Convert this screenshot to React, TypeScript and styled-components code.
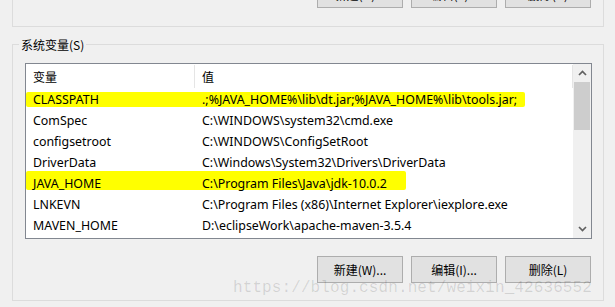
import styled, { createGlobalStyle } from "styled-components";

const GlobalStyle = createGlobalStyle`
  html, body {
    margin: 0;
    padding: 0;
    background: #f0f0f0;
  }
  body {
    width: 615px;
    height: 307px;
    overflow: hidden;
    font-family: "Noto Sans", "Noto Sans CJK SC", sans-serif;
    font-size: 12.4px;
    color: #000;
  }
`;

const Page = styled.div`
  position: relative;
  width: 615px;
  height: 307px;
  padding: 0 11px 0 12px;
  box-sizing: border-box;
`;

const TopGroup = styled.div`
  height: 27px;
  box-sizing: border-box;
  border: 1px solid #dcdcdc;
  border-top: none;
  display: flex;
  justify-content: flex-end;
  align-items: flex-start;
  padding-right: 12px;
`;

const ButtonRow = styled.div<{ $offset?: number }>`
  display: flex;
  justify-content: flex-end;
  gap: 8px;
  margin-top: ${(p) => p.$offset ?? 0}px;
`;

const Button = styled.div`
  width: 86px;
  height: 27px;
  box-sizing: border-box;
  border: 1px solid #adadad;
  background: #e1e1e1;
  display: flex;
  align-items: center;
  justify-content: center;
  font-family: "Noto Sans CJK SC", "Noto Sans", sans-serif;
  font-size: 12px;
`;

const SysGroup = styled.div`
  position: relative;
  margin-top: 17px;
  height: 257px;
  box-sizing: border-box;
  border: 1px solid #dcdcdc;
  padding: 18px 11px 0 12px;
`;

const Legend = styled.div`
  position: absolute;
  top: -9px;
  left: 6px;
  padding: 0 2px;
  background: #f0f0f0;
  font-family: "Noto Sans CJK SC", sans-serif;
  font-size: 12px;
  line-height: 18px;
`;

const List = styled.div`
  height: 176px;
  box-sizing: border-box;
  border: 1px solid #828790;
  background: #fff;
  display: flex;
`;

const ListBody = styled.div`
  width: 547px;
  display: flex;
  flex-direction: column;
`;

const Header = styled.div`
  display: flex;
  height: 25px;
`;

const HeaderCell = styled.div<{ $w?: number }>`
  ${(p) => (p.$w ? `width: ${p.$w}px;` : "flex: 1;")}
  box-sizing: border-box;
  padding-left: 7px;
  border-right: 1px solid #e5e5e5;
  margin: 1px 0 0;
  height: 23px;
  line-height: 24px;
  font-family: "Noto Sans CJK SC", sans-serif;
  font-size: 12px;
`;

const Row = styled.div<{ $mark?: { top: number; height: number; width: number } }>`
  position: relative;
  display: flex;
  height: 21px;
  line-height: 21px;
  &::before {
    content: "";
    display: ${(p) => (p.$mark ? "block" : "none")};
    position: absolute;
    left: 0;
    top: ${(p) => p.$mark?.top ?? 0}px;
    height: ${(p) => p.$mark?.height ?? 0}px;
    width: ${(p) => p.$mark?.width ?? 0}px;
    background: #ffff00;
    border-radius: 2px;
  }
`;

const Cell = styled.div<{ $w?: number }>`
  position: relative;
  ${(p) => (p.$w ? `width: ${p.$w}px;` : "flex: 1;")}
  box-sizing: border-box;
  padding-left: 7px;
  white-space: nowrap;
  overflow: hidden;
`;

const ScrollBar = styled.div`
  width: 18px;
  background: #f0f0f0;
  display: flex;
  flex-direction: column;
`;

const Arrow = styled.div`
  height: 18px;
  display: flex;
  align-items: center;
  justify-content: center;
`;

const Thumb = styled.div`
  height: 48px;
  margin: 0 1px;
  background: #cdcdcd;
`;

const Track = styled.div`
  flex: 1;
`;

const Watermark = styled.div`
  position: absolute;
  left: 233px;
  top: 280px;
  font-family: "Liberation Mono", monospace;
  font-size: 16px;
  line-height: 16px;
  letter-spacing: 0.1px;
  color: rgba(0, 0, 0, 0.13);
  pointer-events: none;
  white-space: nowrap;
`;

const Chevron = ({ up }: { up?: boolean }) => (
  <svg width="9" height="6" viewBox="0 0 9 6">
    <path
      d={up ? "M1 5 L4.5 1.5 L8 5" : "M1 1 L4.5 4.5 L8 1"}
      fill="none"
      stroke="#606060"
      strokeWidth="1.7"
    />
  </svg>
);

const rows = [
  { name: "CLASSPATH", value: ".;%JAVA_HOME%\\lib\\dt.jar;%JAVA_HOME%\\lib\\tools.jar;", mark: { top: 3, height: 15, width: 499 } },
  { name: "ComSpec", value: "C:\\WINDOWS\\system32\\cmd.exe" },
  { name: "configsetroot", value: "C:\\WINDOWS\\ConfigSetRoot" },
  { name: "DriverData", value: "C:\\Windows\\System32\\Drivers\\DriverData" },
  { name: "JAVA_HOME", value: "C:\\Program Files\\Java\\jdk-10.0.2", mark: { top: -2, height: 19, width: 380 } },
  { name: "LNKEVN", value: "C:\\Program Files (x86)\\Internet Explorer\\iexplore.exe" },
  { name: "MAVEN_HOME", value: "D:\\eclipseWork\\apache-maven-3.5.4" },
];

export default function App() {
  return (
    <Page>
      <GlobalStyle />
      <TopGroup>
        <ButtonRow $offset={-19}>
          <Button>新建(N)...</Button>
          <Button>编辑(E)...</Button>
          <Button>删除(D)</Button>
        </ButtonRow>
      </TopGroup>
      <SysGroup>
        <Legend>系统变量(S)</Legend>
        <List>
          <ListBody>
            <Header>
              <HeaderCell $w={169}>变量</HeaderCell>
              <HeaderCell>值</HeaderCell>
            </Header>
            {rows.map((r) => (
              <Row key={r.name} $mark={r.mark}>
                <Cell $w={169}>{r.name}</Cell>
                <Cell>{r.value}</Cell>
              </Row>
            ))}
          </ListBody>
          <ScrollBar>
            <Arrow>
              <Chevron up />
            </Arrow>
            <Thumb />
            <Track />
            <Arrow>
              <Chevron />
            </Arrow>
          </ScrollBar>
        </List>
        <ButtonRow $offset={17} style={{ paddingRight: 1 }}>
          <Button>新建(W)...</Button>
          <Button>编辑(I)...</Button>
          <Button>删除(L)</Button>
        </ButtonRow>
      </SysGroup>
      <Watermark>https://blog.csdn.net/weixin_42636552</Watermark>
    </Page>
  );
}
